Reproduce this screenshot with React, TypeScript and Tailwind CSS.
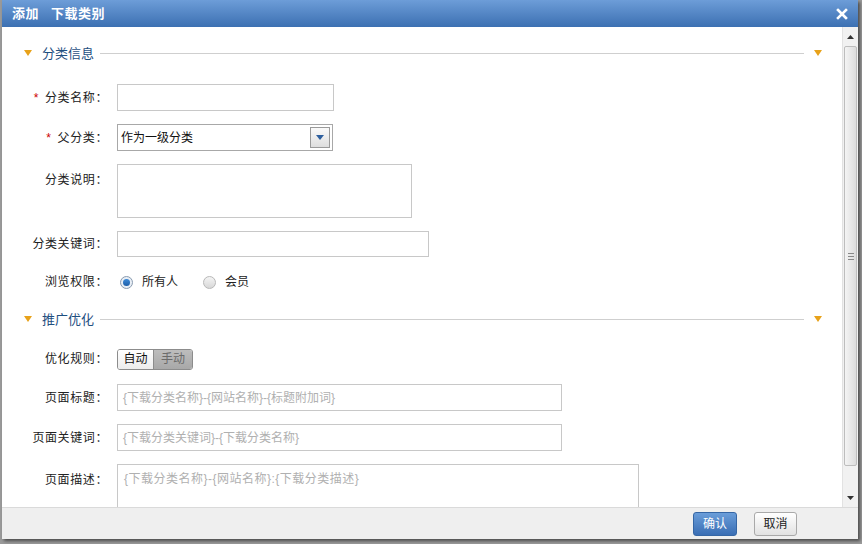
import React from "react";

const font = { fontFamily: '"Liberation Sans", "Noto Sans CJK SC", sans-serif' };

function SectionHeader({ title }: { title: string }) {
  return (
    <div className="flex items-center h-[16px] pl-[22px] pr-[20px]">
      <svg width="8" height="6" viewBox="0 0 8 6" className="shrink-0">
        <polygon points="0,0 8,0 4,6" fill="#e8a21a" />
      </svg>
      <span className="ml-[10px] text-[13px] text-[#1f4f7f] leading-none">{title}</span>
      <div className="flex-1 h-px bg-[#cfcfcf] ml-[6px] mr-[10px]" />
      <svg width="8" height="6" viewBox="0 0 8 6" className="shrink-0">
        <polygon points="0,0 8,0 4,6" fill="#e8a21a" />
      </svg>
    </div>
  );
}

function Row({
  label,
  required,
  top,
  children,
}: {
  label: string;
  required?: boolean;
  top?: boolean;
  children: React.ReactNode;
}) {
  return (
    <div className={`flex ${top ? "items-start" : "items-center"}`}>
      <div
        className={`w-[106px] shrink-0 text-right text-[12px] text-[#222] tracking-[0.6px] ${top ? "pt-[7px]" : ""}`}
      >
        {required && <span className="text-[#cc0000] mr-[6px]">*</span>}
        {label}
      </div>
      <div className="ml-[9px]">{children}</div>
    </div>
  );
}

function Radio({ checked }: { checked?: boolean }) {
  return (
    <span
      className={`inline-flex items-center justify-center w-[13px] h-[13px] rounded-full border ${
        checked ? "border-[#8a9bb0] bg-[#e8eef5]" : "border-[#b8b8b8] bg-gradient-to-b from-[#f4f4f4] to-[#d8d8d8]"
      }`}
    >
      {checked && <span className="w-[7px] h-[7px] rounded-full bg-gradient-to-b from-[#3c8ad8] to-[#1d5ea8]" />}
    </span>
  );
}

export default function App() {
  return (
    <div className="w-[862px] h-[544px] bg-[#9a9a9a] overflow-hidden" style={font}>
      <div className="ml-[2px] w-[856px] h-[539px] flex flex-col bg-white shadow-[2px_2px_3px_rgba(0,0,0,0.5)]">
        {/* Header */}
        <div className="h-[27px] shrink-0 flex items-center bg-gradient-to-b from-[#6d9dd8] to-[#3c70b2] pl-[10px] pr-[8px]">
          <span className="text-white font-bold text-[13px] tracking-[0.5px]">添加</span>
          <span className="text-white font-bold text-[13px] ml-[12px] tracking-[0.5px]">下载类别</span>
          <div className="flex-1" />
          <svg width="12" height="12" viewBox="0 0 12 12" className="mr-[2px]">
            <path d="M2 2 L10 10 M10 2 L2 10" stroke="white" strokeWidth="2.6" strokeLinecap="square" />
          </svg>
        </div>
        {/* Body */}
        <div className="flex h-[480px] shrink-0">
          <div className="flex-1 overflow-hidden">
            <div className="pt-[18px]">
              <SectionHeader title="分类信息" />
              <div className="flex flex-col gap-[13px] mt-[23px]">
                <Row label="分类名称：" required>
                  <div className="w-[217px] h-[27px] border border-[#c8c8c8] bg-white" />
                </Row>
                <Row label="父分类：" required>
                  <div className="w-[216px] h-[27px] border border-[#a8a8a8] bg-white flex items-center pl-[3px] pr-[2px]">
                    <span className="flex-1 text-[12px] text-[#111]">作为一级分类</span>
                    <div className="w-[20px] h-[21px] border border-[#9a9a9a] bg-gradient-to-b from-[#fafafa] to-[#dedede] flex items-center justify-center">
                      <svg width="8" height="5" viewBox="0 0 8 5">
                        <polygon points="0,0 8,0 4,5" fill="#2e5f9e" />
                      </svg>
                    </div>
                  </div>
                </Row>
                <Row label="分类说明：" top>
                  <div className="w-[295px] h-[54px] border border-[#c8c8c8] bg-white" />
                </Row>
                <Row label="分类关键词：">
                  <div className="w-[312px] h-[26px] border border-[#c8c8c8] bg-white" />
                </Row>
                <Row label="浏览权限：">
                  <div className="h-[24px] flex items-center text-[12px] text-[#222]">
                    <span className="ml-[3px] inline-flex"><Radio checked /></span>
                    <span className="ml-[9px]">所有人</span>
                    <span className="ml-[25px] inline-flex"><Radio /></span>
                    <span className="ml-[9px]">会员</span>
                  </div>
                </Row>
              </div>
              <div className="mt-[17px]">
                <SectionHeader title="推广优化" />
              </div>
              <div className="flex flex-col gap-[13px] mt-[20px]">
                <Row label="优化规则：">
                  <div className="h-[24px] flex items-center">
                    <div className="flex h-[21px] rounded-[3px] border border-[#8c8c8c] overflow-hidden text-[12px]">
                      <div className="w-[36px] flex items-center justify-center bg-gradient-to-b from-white to-[#ececec] text-[#111] border-r border-[#8c8c8c]">
                        自动
                      </div>
                      <div className="w-[38px] flex items-center justify-center bg-gradient-to-b from-[#bdbdbd] to-[#a8a8a8] text-[#6a6a6a]">
                        手动
                      </div>
                    </div>
                  </div>
                </Row>
                <Row label="页面标题：">
                  <div className="w-[445px] h-[27px] border border-[#c8c8c8] bg-white flex items-center pl-[5px] text-[12px] text-[#b0b0b0]">
                    {"{下载分类名称}-{网站名称}-{标题附加词}"}
                  </div>
                </Row>
                <Row label="页面关键词：">
                  <div className="w-[445px] h-[27px] border border-[#c8c8c8] bg-white flex items-center pl-[5px] text-[12px] text-[#b0b0b0]">
                    {"{下载分类关键词}-{下载分类名称}"}
                  </div>
                </Row>
                <Row label="页面描述：" top>
                  <div className="w-[522px] h-[60px] border border-[#c8c8c8] bg-white pl-[6px] pt-[5px] text-[12px] text-[#b0b0b0] tracking-[0.5px]">
                    {"{下载分类名称}-{网站名称}:{下载分类描述}"}
                  </div>
                </Row>
              </div>
            </div>
          </div>
          {/* Scrollbar */}
          <div className="w-[16px] shrink-0 bg-[#f1f1f1] border-l border-[#e2e2e2] flex flex-col items-center">
            <div className="h-[19px] flex items-center justify-center">
              <svg width="7" height="4" viewBox="0 0 7 4"><polygon points="0,4 7,4 3.5,0" fill="#333" /></svg>
            </div>
            <div className="w-[13px] h-[420px] rounded-[2px] border border-[#bdbdbd] bg-gradient-to-r from-[#f4f4f4] to-[#dcdcdc] flex flex-col items-center justify-center gap-[2px]">
              <div className="w-[6px] h-px bg-[#888]" />
              <div className="w-[6px] h-px bg-[#888]" />
              <div className="w-[6px] h-px bg-[#888]" />
            </div>
            <div className="flex-1" />
            <div className="h-[19px] flex items-center justify-center">
              <svg width="7" height="4" viewBox="0 0 7 4"><polygon points="0,0 7,0 3.5,4" fill="#333" /></svg>
            </div>
          </div>
        </div>
        {/* Footer */}
        <div className="flex-1 bg-[#efefef] border-t border-[#dadada] flex items-center justify-end pr-[61px]">
          <div className="w-[44px] h-[24px] rounded-[3px] border border-[#3566a5] bg-gradient-to-b from-[#6a9dd9] to-[#3a6eb4] text-white text-[12px] flex items-center justify-center">
            确认
          </div>
          <div className="w-[43px] h-[24px] ml-[17px] rounded-[3px] border border-[#a9a9a9] bg-gradient-to-b from-white to-[#e2e2e2] text-[#222] text-[12px] flex items-center justify-center">
            取消
          </div>
        </div>
      </div>
    </div>
  );
}
